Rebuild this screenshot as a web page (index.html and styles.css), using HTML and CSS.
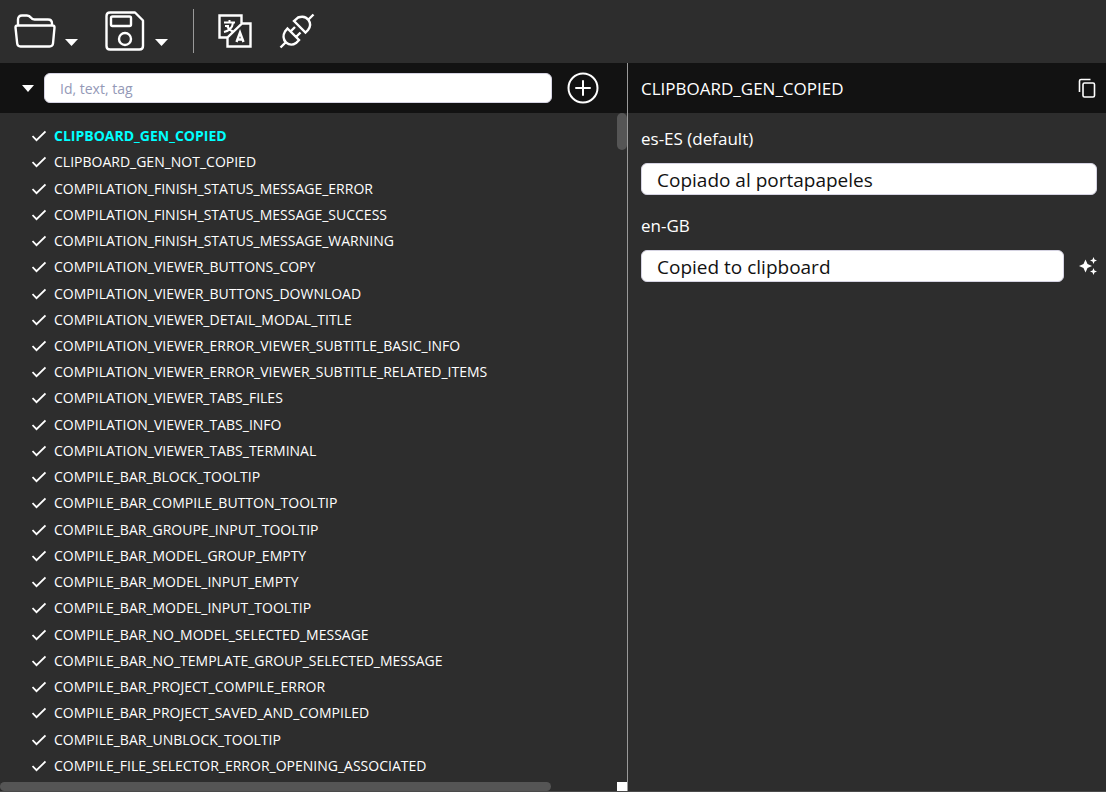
FILE: index.html
```html
<!DOCTYPE html>
<html lang="en">
<head>
<meta charset="utf-8">
<title>Translations</title>
<link rel="stylesheet" href="styles.css">
</head>
<body>
<div class="app">
  <header class="toolbar">
    <button class="tool" aria-label="Open">
      <svg width="42" height="42" viewBox="0 0 42 42" fill="none" stroke="#fff" stroke-width="2.400" stroke-linejoin="round"><path d="M4 15V9.500q0-4 4-4h5q2.500 0 4 2.200 1 1.800 3.500 1.800H34q4 0 4 4V15M3.500 15.500h35q2 0 2 2l-1.500 16q-.3 3-3.500 3h-29q-3 0-3.300-3L1.500 17.500q0-2 2-2z"/></svg>
    </button>
    <button class="drop" aria-label="Open options"><svg width="13" height="7" viewBox="0 0 13 7"><path d="M0 0h13L6.500 7z" fill="#fff"/></svg></button>
    <button class="tool save" aria-label="Save">
      <svg width="40" height="42" viewBox="0 0 40 42" fill="none" stroke="#fff" stroke-width="2.400" stroke-linejoin="round"><path d="M5 2.500h25l8 8V36q0 3.500-3.500 3.500H5Q1.500 39.500 1.500 36V6Q1.500 2.500 5 2.500z"/><rect x="6" y="6.500" width="20" height="9.500" rx="1.500"/><circle cx="20" cy="29" r="6"/></svg>
    </button>
    <button class="drop" aria-label="Save options"><svg width="13" height="7" viewBox="0 0 13 7"><path d="M0 0h13L6.500 7z" fill="#fff"/></svg></button>
    <span class="separator"></span>
    <button class="tool" aria-label="Translate">
      <svg width="34" height="34" viewBox="0 0 34 34" fill="none" stroke="#fff" stroke-width="2.400"><path d="M9 23.500H1.500v-22h22V9M9.500 24V32.500h23v-23H24L9.500 23.500z"/><path d="M6 8.500h11M11.500 6v2.500M7 12h4M15 9q-1 7-9 9M9 12q2 4 6 5.500" stroke-width="2"/><path d="M18.500 28l3.500-9.500 3.500 9.500M20 25.500h4"/></svg>
    </button>
    <button class="tool plug" aria-label="Connect">
      <svg width="36" height="36" viewBox="0 0 36 36" fill="none" stroke="#fff" stroke-width="2.400"><path d="M15 8L26.500 19.500l2.500-2.500q4-5 .5-10t-10.500-2.500zM29.500 6.500L34.500 1.500M8.500 15.500L20 27l-3 3q-5 3.500-10-.5-4.500-5-1-11zM6 30L1.500 34.500M11.500 18.500l4.500-4.500M17 24l4.500-4.500"/></svg>
    </button>
  </header>
  <main class="panels">
    <section class="keys">
      <div class="bar search-bar">
        <button class="caret" aria-label="Filters"><svg width="12" height="7" viewBox="0 0 12 7"><path d="M0 0h12L6 7z" fill="#fff"/></svg></button>
        <input class="field search" type="text" placeholder="Id, text, tag" aria-label="Search">
        <button class="add" aria-label="Add"><svg width="32" height="32" viewBox="0 0 32 32" fill="none" stroke="#fff" stroke-width="2" stroke-linecap="round"><circle cx="16" cy="16" r="14.500"/><path d="M16 9v14M9 16h14"/></svg></button>
      </div>
      <svg class="defs" aria-hidden="true"><symbol id="check" viewBox="0 0 14 12"><path d="M.5 6l4 4.200L13.500 1.500" fill="none" stroke="#fff" stroke-width="1.800"/></symbol></svg>
      <div class="scroll">
        <ul class="list">
          <li class="selected"><svg class="check"><use href="#check"/></svg>CLIPBOARD_GEN_COPIED</li>
          <li><svg class="check"><use href="#check"/></svg>CLIPBOARD_GEN_NOT_COPIED</li>
          <li><svg class="check"><use href="#check"/></svg>COMPILATION_FINISH_STATUS_MESSAGE_ERROR</li>
          <li><svg class="check"><use href="#check"/></svg>COMPILATION_FINISH_STATUS_MESSAGE_SUCCESS</li>
          <li><svg class="check"><use href="#check"/></svg>COMPILATION_FINISH_STATUS_MESSAGE_WARNING</li>
          <li><svg class="check"><use href="#check"/></svg>COMPILATION_VIEWER_BUTTONS_COPY</li>
          <li><svg class="check"><use href="#check"/></svg>COMPILATION_VIEWER_BUTTONS_DOWNLOAD</li>
          <li><svg class="check"><use href="#check"/></svg>COMPILATION_VIEWER_DETAIL_MODAL_TITLE</li>
          <li><svg class="check"><use href="#check"/></svg>COMPILATION_VIEWER_ERROR_VIEWER_SUBTITLE_BASIC_INFO</li>
          <li><svg class="check"><use href="#check"/></svg>COMPILATION_VIEWER_ERROR_VIEWER_SUBTITLE_RELATED_ITEMS</li>
          <li><svg class="check"><use href="#check"/></svg>COMPILATION_VIEWER_TABS_FILES</li>
          <li><svg class="check"><use href="#check"/></svg>COMPILATION_VIEWER_TABS_INFO</li>
          <li><svg class="check"><use href="#check"/></svg>COMPILATION_VIEWER_TABS_TERMINAL</li>
          <li><svg class="check"><use href="#check"/></svg>COMPILE_BAR_BLOCK_TOOLTIP</li>
          <li><svg class="check"><use href="#check"/></svg>COMPILE_BAR_COMPILE_BUTTON_TOOLTIP</li>
          <li><svg class="check"><use href="#check"/></svg>COMPILE_BAR_GROUPE_INPUT_TOOLTIP</li>
          <li><svg class="check"><use href="#check"/></svg>COMPILE_BAR_MODEL_GROUP_EMPTY</li>
          <li><svg class="check"><use href="#check"/></svg>COMPILE_BAR_MODEL_INPUT_EMPTY</li>
          <li><svg class="check"><use href="#check"/></svg>COMPILE_BAR_MODEL_INPUT_TOOLTIP</li>
          <li><svg class="check"><use href="#check"/></svg>COMPILE_BAR_NO_MODEL_SELECTED_MESSAGE</li>
          <li><svg class="check"><use href="#check"/></svg>COMPILE_BAR_NO_TEMPLATE_GROUP_SELECTED_MESSAGE</li>
          <li><svg class="check"><use href="#check"/></svg>COMPILE_BAR_PROJECT_COMPILE_ERROR</li>
          <li><svg class="check"><use href="#check"/></svg>COMPILE_BAR_PROJECT_SAVED_AND_COMPILED</li>
          <li><svg class="check"><use href="#check"/></svg>COMPILE_BAR_UNBLOCK_TOOLTIP</li>
          <li><svg class="check"><use href="#check"/></svg>COMPILE_FILE_SELECTOR_ERROR_OPENING_ASSOCIATED</li>
        </ul>
        <div class="track-y"><div class="thumb-y"></div></div>
        <div class="track-x"><div class="thumb-x"></div></div>
        <div class="corner"></div>
      </div>
    </section>
    <section class="detail">
      <div class="bar title-bar">
        <h1 class="title">CLIPBOARD_GEN_COPIED</h1>
        <button class="copy" aria-label="Copy"><svg width="18" height="20" viewBox="0 0 18 20" fill="none" stroke="#fff" stroke-width="1.600"><path d="M1.500 14V3q0-1.500 1.500-1.500h9.500"/><rect x="5" y="5" width="11.500" height="14" rx="1.500"/></svg></button>
      </div>
      <form class="form">
        <label class="label" for="es">es-ES (default)</label>
        <div class="entry"><input class="field value" id="es" type="text" value="Copiado al portapapeles"></div>
        <label class="label" for="en">en-GB</label>
        <div class="entry">
          <input class="field value" id="en" type="text" value="Copied to clipboard">
          <button class="spark" type="button" aria-label="Suggest translation"><svg width="18" height="18" viewBox="0 0 18 18" fill="#fff"><path d="M6.500 2.500l2 4.500 4.500 2-4.500 2-2 4.500-2-4.500L0 9l4.500-2zM14.500 0l1 2.500L18 3.500l-2.500 1-1 2.500-1-2.500-2.500-1 2.500-1zM14.500 11l1 2.500 2.500 1-2.500 1-1 2.500-1-2.500-2.500-1 2.500-1z"/></svg></button>
        </div>
      </form>
    </section>
  </main>
</div>
</body>
</html>
```
FILE: styles.css
```css
* { box-sizing: border-box; }
body {
  margin: 0;
  background: #2d2d2d;
  color: #fff;
  font-family: "Open Sans", "Noto Sans", sans-serif;
}
button {
  padding: 0;
  border: 0;
  background: none;
  color: inherit;
  flex: none;
}
svg { display: block; }
.defs { position: absolute; width: 0; height: 0; }
.app {
  display: flex;
  flex-direction: column;
  height: 100vh;
  border-bottom: 1px solid #4a4a4a;
}
.toolbar {
  display: flex;
  align-items: center;
  height: 63px;
  padding: 0 0 2px 14px;
}
.drop { margin: 24px 0 0 9px; }
.save { margin-left: 27px; }
.save + .drop { margin-left: 10px; }
.separator {
  width: 1px;
  height: 44px;
  margin: 0 24px 0 25px;
  background: #999;
}
.plug { margin-left: 27px; }
.panels {
  display: grid;
  grid-template-columns: 628fr 478fr;
  flex: 1;
  min-height: 0;
}
.keys {
  display: flex;
  flex-direction: column;
  min-width: 0;
  border-right: 1px solid #999;
}
.detail { min-width: 0; }
.bar {
  display: flex;
  align-items: center;
  height: 50px;
  background: #121212;
}
.search-bar { padding: 0 28px 0 22px; }
.field {
  flex: 1;
  min-width: 0;
  border: 1px solid #d5d3e2;
  border-radius: 6px;
  background: #fff;
  color: #121212;
  font-family: inherit;
}
.search {
  height: 30px;
  margin: 0 15px 0 10px;
  padding: 0 15px;
  font-size: 14px;
}
.search::placeholder { color: #9499b7; opacity: 1; }
.scroll {
  display: grid;
  grid-template-columns: 1fr 10px;
  grid-template-rows: 1fr 9px;
  flex: 1;
  min-height: 0;
}
.list {
  display: flex;
  flex-direction: column;
  margin: 0;
  padding: 10px 0 3px 32px;
  list-style: none;
  font-size: 14px;
  white-space: nowrap;
}
.list li {
  display: flex;
  flex: 1;
  align-items: center;
  gap: 8px;
  line-height: 20px;
}
.list .selected { color: #0ff; font-weight: 700; }
.check { width: 14px; height: 12px; }
.thumb-y { height: 37px; border-radius: 5px; background: #555; }
.thumb-x { width: 551px; max-width: 100%; height: 9px; border-radius: 5px; background: #555; }
.corner { background: #fff; }
.title-bar {
  justify-content: space-between;
  padding: 0 10px 0 13px;
}
.title { margin: 0; font-size: 17px; font-weight: 400; }
.form {
  display: flex;
  flex-direction: column;
  padding: 14px 9px 0 13px;
}
.label { font-size: 17px; line-height: 24px; }
.entry {
  display: flex;
  align-items: center;
  gap: 15px;
  margin: 12px 0 19px;
}
.value {
  height: 32px;
  padding: 1px 15px 0;
  font-size: 19px;
}
```
